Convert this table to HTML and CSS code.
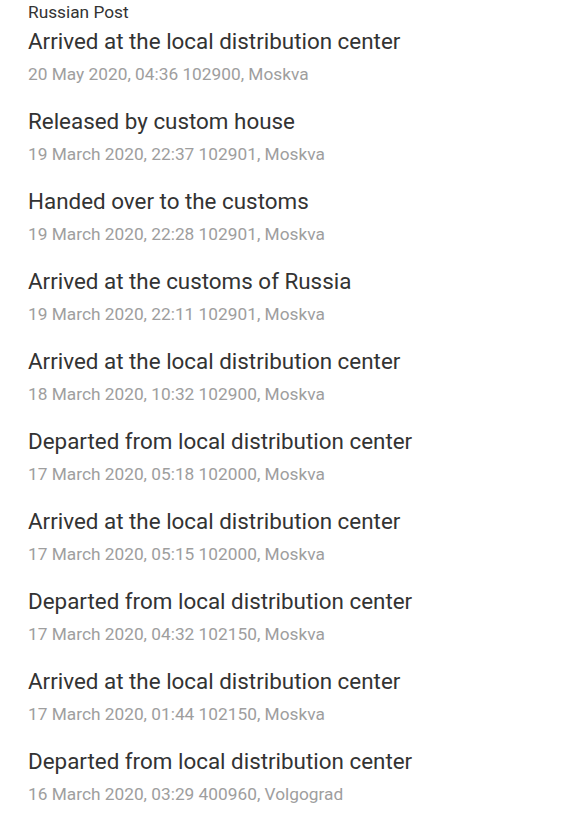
FILE: index.html
```html
<!DOCTYPE html>
<html>
<head>
<meta charset="utf-8">
<link rel="stylesheet" href="styles.css">
</head>
<body>
<div class="page">
  <div class="carrier">Russian Post</div>
  <ul class="events">
    <li class="event"><div class="title">Arrived at the local distribution center</div><div class="meta">20 May 2020, 04:36 102900, Moskva</div></li>
    <li class="event"><div class="title">Released by custom house</div><div class="meta">19 March 2020, 22:37 102901, Moskva</div></li>
    <li class="event"><div class="title">Handed over to the customs</div><div class="meta">19 March 2020, 22:28 102901, Moskva</div></li>
    <li class="event"><div class="title">Arrived at the customs of Russia</div><div class="meta">19 March 2020, 22:11 102901, Moskva</div></li>
    <li class="event"><div class="title">Arrived at the local distribution center</div><div class="meta">18 March 2020, 10:32 102900, Moskva</div></li>
    <li class="event"><div class="title">Departed from local distribution center</div><div class="meta">17 March 2020, 05:18 102000, Moskva</div></li>
    <li class="event"><div class="title">Arrived at the local distribution center</div><div class="meta">17 March 2020, 05:15 102000, Moskva</div></li>
    <li class="event"><div class="title">Departed from local distribution center</div><div class="meta">17 March 2020, 04:32 102150, Moskva</div></li>
    <li class="event"><div class="title">Arrived at the local distribution center</div><div class="meta">17 March 2020, 01:44 102150, Moskva</div></li>
    <li class="event"><div class="title">Departed from local distribution center</div><div class="meta">16 March 2020, 03:29 400960, Volgograd</div></li>
  </ul>
</div>
</body>
</html>
```
FILE: styles.css
```css
html, body { margin: 0; padding: 0; background: #fff; }
body { font-family: Roboto, "Noto Sans", sans-serif; }
.page { padding: 1px 0 0 28px; }
.carrier { font-size: 17.3px; line-height: 22px; color: #333; }
.events { list-style: none; margin: 0; padding: 0; display: flex; flex-direction: column; gap: 14px; }
.event { display: flex; flex-direction: column; }
.title { font-size: 22.4px; line-height: 36px; color: #333; }
.meta { font-size: 17.3px; line-height: 30px; color: #9e9e9e; }
```
